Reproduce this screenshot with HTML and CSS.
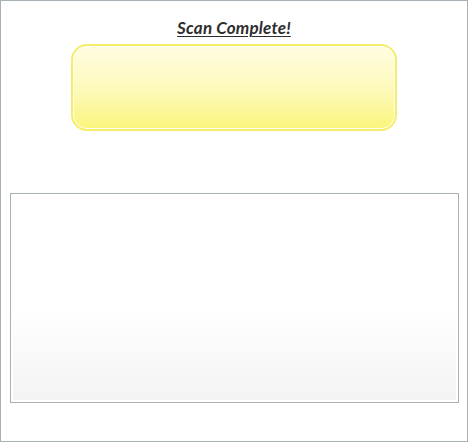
FILE: index.html
```html
<!DOCTYPE html>
<html>
<head>
<meta charset="utf-8">
<link rel="stylesheet" href="styles.css">
</head>
<body>
<div class="frame">
  <div class="title-row"><span class="title">Scan Complete!</span></div>
  <div class="notice"></div>
  <div class="results"></div>
</div>
</body>
</html>
```
FILE: styles.css
```css
html, body {
  margin: 0;
  padding: 0;
  background: #ffffff;
}
.frame {
  box-sizing: border-box;
  width: 468px;
  height: 442px;
  border: 1px solid #a7b0b4;
  display: flex;
  flex-direction: column;
  align-items: flex-start;
}
.title-row {
  align-self: stretch;
  height: 43px;
  box-sizing: border-box;
  padding-top: 16px;
  text-align: center;
}
.title {
  font-family: Lato, "Open Sans", sans-serif;
  font-weight: bold;
  font-style: italic;
  font-size: 17px;
  line-height: 21px;
  letter-spacing: 0.2px;
  color: #2e2e2e;
  text-decoration: underline;
  text-decoration-thickness: 1px;
  text-underline-offset: 2px;
}
.notice {
  box-sizing: border-box;
  margin-left: 70px;
  width: 326px;
  height: 87px;
  border: 2px solid #f6ed6a;
  border-radius: 16px;
  box-shadow: inset 0 0 0 1px #fffef2;
  background: linear-gradient(to bottom, #fffde3 0%, #fdf9b8 55%, #fbf47c 100%);
}
.results {
  box-sizing: border-box;
  margin-top: 62px;
  margin-left: 9px;
  width: 449px;
  height: 210px;
  border: 1px solid #a7b0b4;
  box-shadow: inset 0 0 0 2px #ffffff;
  background: linear-gradient(to bottom, #ffffff 0%, #ffffff 55%, #f3f3f3 100%);
}
```
